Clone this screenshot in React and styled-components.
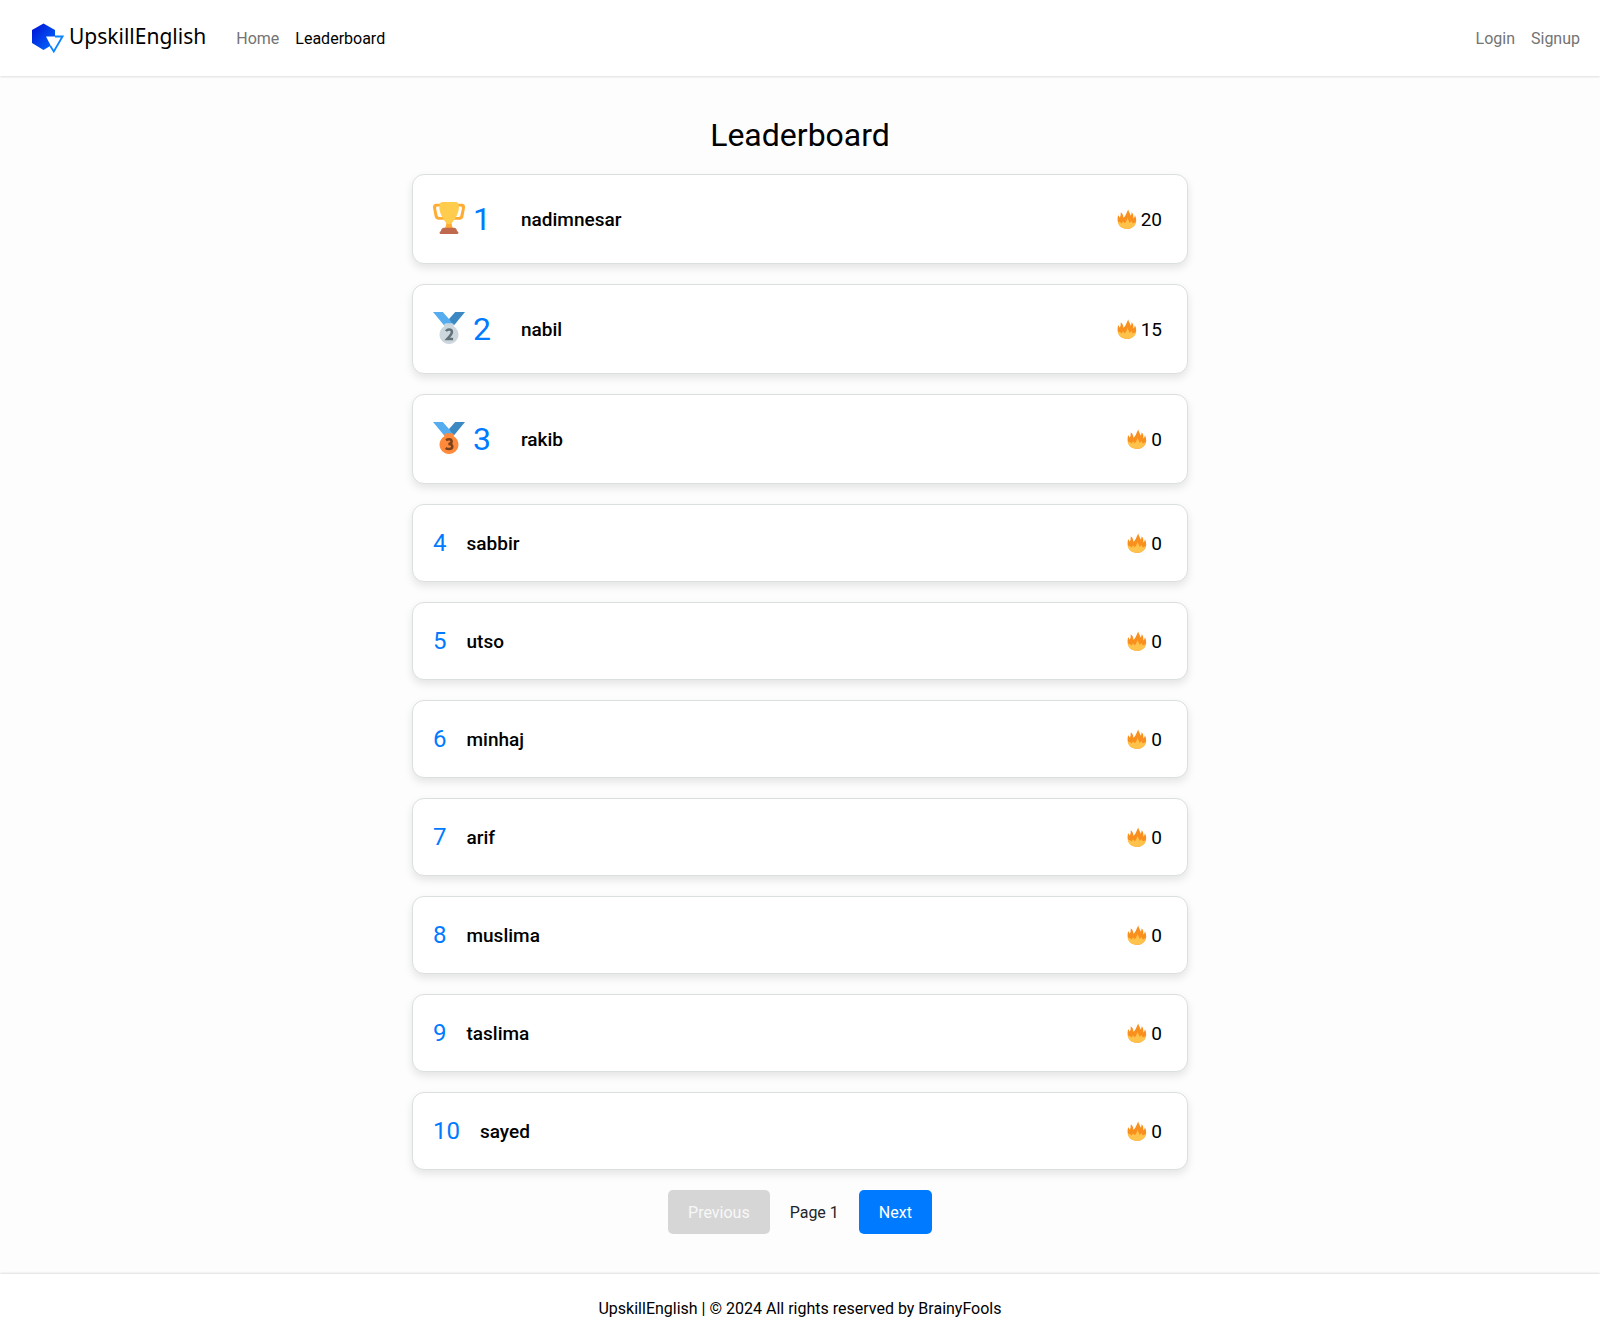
import React, { useState } from "react";
import styled, { createGlobalStyle } from "styled-components";

const GlobalStyle = createGlobalStyle`
  *, *::before, *::after { box-sizing: border-box; }
  body {
    margin: 0;
    background: #fdfdfd;
    color: #000;
    font-family: Roboto, "Liberation Sans", sans-serif;
    font-size: 16px;
    line-height: 25px;
  }
`;

const Page = styled.div`
  display: flex;
  flex-direction: column;
  min-height: 100vh;
`;

const Navbar = styled.header`
  display: flex;
  align-items: center;
  justify-content: space-between;
  padding: 18px 12px 17px 32px;
  background: #fff;
  box-shadow: 0 1px 2px rgba(0, 0, 0, 0.12);
`;

const NavGroup = styled.nav`
  display: flex;
  align-items: center;
`;

const Brand = styled.a`
  display: flex;
  align-items: center;
  gap: 5px;
  margin-right: 22px;
  color: #000;
  text-decoration: none;
`;

const BrandName = styled.span`
  padding-bottom: 5px;
  font-family: "Noto Sans", "Open Sans", sans-serif;
  font-size: 21px;
  line-height: 36px;
`;

const NavLink = styled.a`
  padding: 8px;
  color: ${(p) => (p.$active ? "#000" : "#737373")};
  text-decoration: none;
`;

const Main = styled.main`
  flex: 1;
  width: 100%;
  max-width: 800px;
  margin: 0 auto;
  padding: 40px 12px;
`;

const Title = styled.h1`
  margin: 0 0 20px;
  font-size: 32px;
  font-weight: 400;
  line-height: 38px;
  text-align: center;
`;

const List = styled.ol`
  display: flex;
  flex-direction: column;
  gap: 20px;
  margin: 0;
  padding: 0;
  list-style: none;
`;

const Card = styled.li`
  display: flex;
  align-items: center;
  padding: 20px;
  border: 1px solid #dadfe0;
  border-radius: 12px;
  background: #fff;
  box-shadow: 0 4px 8px rgba(0, 0, 0, 0.1);
`;

const Rank = styled.div`
  display: flex;
  align-items: center;
  gap: 8px;
  margin-right: ${(p) => (p.$top ? 30 : 20)}px;
  color: #007bff;
  font-size: ${(p) => (p.$top ? 32 : 24)}px;
  line-height: ${(p) => (p.$top ? 48 : 36)}px;

  svg {
    margin-bottom: 2px;
  }
`;

const Name = styled.div`
  flex: 1;
  font-size: 19px;
  font-weight: 500;
`;

const Score = styled.div`
  display: flex;
  align-items: center;
  gap: 4px;
  margin-right: 5px;
  font-size: 19px;
`;

const Pager = styled.div`
  display: flex;
  align-items: center;
  justify-content: center;
  gap: 20px;
  margin-top: 20px;
  color: #212529;
`;

const PageButton = styled.button`
  padding: 10px 20px 9px;
  border: 0;
  border-radius: 5px;
  background: #007bff;
  color: #fff;
  font: inherit;
  cursor: pointer;

  &:disabled {
    background: #d6d6d6;
    color: #f8f8f8;
    cursor: not-allowed;
  }
`;

const Footer = styled.footer`
  padding: 22px 12px 21px;
  background: #fff;
  box-shadow: 0 -1px 2px rgba(0, 0, 0, 0.12);
  text-align: center;
`;

const Logo = () => (
  <svg width="32" height="32" viewBox="0 0 32 32" aria-hidden="true">
    <defs>
      <linearGradient id="hex" x1="0" y1="0" x2="1" y2="1">
        <stop offset="0.1" stopColor="#0018d8" />
        <stop offset="1" stopColor="#0070ff" />
      </linearGradient>
    </defs>
    <path d="M11.5 0.5 23 7v13l-11.500 7L0 20V7z" fill="url(#hex)" />
    <path d="M16.500 13.500h14L21.800 28.500z" fill="none" />
    <path d="M14 13.500h16.500L21.800 28.500z" fill="#fff" />
    <path d="M23 13.500h7.500L21.800 28.500l-3.500-5.500" fill="none" stroke="#0a84ff" strokeWidth="1.800" />
  </svg>
);

const Trophy = () => (
  <svg width="32" height="32" viewBox="0 0 36 36" aria-label="Trophy" role="img">
    <path fill="#FFAC33" d="M5.123 5h6C12.227 5 13 4.896 13 6V4c0-1.104-.773-2-1.877-2h-8c-2 0-3.583 2.125-3 5 0 0 1.791 9.375 1.917 9.958C2.373 18.500 4.164 20 6.081 20h6.958c1.105 0-.039-1.896-.039-3v-2c0 1.104-.773 2-1.877 2h-4c-1.104 0-1.833-1.042-2-2S3.539 7.667 3.539 7.667C3.206 5.750 4.018 5 5.123 5zm25.812 0h-6C23.831 5 22 4.896 22 6V4c0-1.104 1.831-2 2.935-2h8c2 0 3.584 2.125 3 5 0 0-1.633 9.419-1.771 10-.354 1.500-2.042 3-4 3h-7.146C21.914 20 22 18.104 22 17v-2c0 1.104 1.831 2 2.935 2h4c1.104 0 1.834-1.042 2-2s1.584-7.333 1.584-7.333C32.851 5.750 32.040 5 30.935 5zM20.832 22c0-6.958-2.709 0-2.709 0s-3-6.958-3 0-3.291 10-3.291 10h12.292c-.001 0-3.292-3.042-3.292-10z" />
    <path fill="#FFCC4D" d="M29.123 6.577c0 6.775-6.770 18.423-11 18.423-4.231 0-11-11.649-11-18.423 0-5.776 2.128-6.577 3.671-6.577h14.657c1.542 0 3.672.801 3.672 6.577z" />
    <path fill="#C1694F" d="M27 33c0-2.500-1.500-4-3.500-4h-11C10.500 29 9 30.500 9 33H8.500C7 33 7 36 8.500 36h19c1.500 0 1.500-3 0-3z" />
  </svg>
);

const Medal = ({ place }) => (
  <svg width="32" height="32" viewBox="0 0 36 36" aria-label={`Medal ${place}`} role="img">
    <path fill="#55ACEE" d="m18 8-7-8H0l14 17 11.521-4.750z" />
    <path fill="#3B88C3" d="m25 0-7 8 5.390 7.312 1.227-1.489L36 0z" />
    <path
      fill={place === 2 ? "#CCD6DD" : "#FF8A3B"}
      d="M23.205 16.026c.080-.217.131-.448.131-.693V14.665a2 2 0 0 0-2-2h-6.667a2 2 0 0 0-2 2v.668c0 .245.050.476.131.693-3.258 1.826-5.464 5.307-5.464 9.307C7.336 31.224 12.111 36 18.002 36s10.667-4.776 10.667-10.667c0-4-2.206-7.481-5.464-9.307z"
    />
    {place === 2 ? (
      <path fill="none" stroke="#627077" strokeWidth="2.800" d="M14.600 21.500c1-1.500 2.500-1.900 3.600-1.900 1.800 0 3.100 1 3.100 2.800 0 2.400-3 5.300-5.400 8h6.700" />
    ) : (
      <path fill="none" stroke="#7C4119" strokeWidth="2.800" d="M14.700 20.700c1-.9 2.100-1.200 3.300-1.200 1.900 0 3 .9 3 2.500s-1.200 2.700-3.700 2.700c2.900 0 4.400 1 4.400 2.900 0 1.800-1.500 2.900-3.700 2.900-1.400 0-2.700-.4-3.700-1.300" />
    )}
  </svg>
);

const Flame = () => (
  <svg width="20" height="20" viewBox="0 0 20 20" aria-hidden="true">
    <path fill="#f98f1d" d="M1.200 6.200C2 6.800 2.300 7.600 2.600 8.800 3.900 7.300 3.700 5.200 3.700 3.600c2 .6 2.400 2.800 2.700 5.200C8.600 7.800 9.200 4 11.400.2c-.3 2.200 1.800 3.500 2.300 6.600.8-.9.900-2.200.8-3.600 1.900 1.500 2 4 1.900 6.200 1.100-.8 1.500-2.200 1.500-3.400 3.400 7-.2 13.800-7.900 13.800C2.600 19.800-1 13.500 1.200 6.200z" />
    <path fill="#ffc24a" d="M.7 13c1.600-.5 2.800.4 3.700 1.600.8-.6 1-1.300 1.100-2.200 1.200.2 1.800 1 2.200 1.900 1.700-1.200 1.800-3.400 3-5.400.2 2 1.700 3 1.900 5 .9-.3 1.300-1 1.400-1.800 1 .5 1.400 1.300 1.500 2.200 1.200.1 2.500-.5 3.600-1.700-.5 4.400-4 7.200-9.100 7.200C4.900 19.800 1.500 17.300.7 13z" />
  </svg>
);

const players = [
  ["nadimnesar", 20],
  ["nabil", 15],
  ["rakib", 0],
  ["sabbir", 0],
  ["utso", 0],
  ["minhaj", 0],
  ["arif", 0],
  ["muslima", 0],
  ["taslima", 0],
  ["sayed", 0],
];

export default function App() {
  const [page, setPage] = useState(1);
  return (
    <Page>
      <GlobalStyle />
      <Navbar>
        <NavGroup>
          <Brand href="#home">
            <Logo />
            <BrandName>UpskillEnglish</BrandName>
          </Brand>
          <NavLink href="#home">Home</NavLink>
          <NavLink href="#leaderboard" $active>Leaderboard</NavLink>
        </NavGroup>
        <NavGroup>
          <NavLink href="#login">Login</NavLink>
          <NavLink href="#signup">Signup</NavLink>
        </NavGroup>
      </Navbar>
      <Main>
        <Title>Leaderboard</Title>
        <List>
          {players.map(([name, score], i) => {
            const place = i + 1;
            return (
              <Card key={name}>
                <Rank $top={place <= 3}>
                  {place === 1 && <Trophy />}
                  {(place === 2 || place === 3) && <Medal place={place} />}
                  <span>{place}</span>
                </Rank>
                <Name>{name}</Name>
                <Score>
                  <Flame />
                  <span>{score}</span>
                </Score>
              </Card>
            );
          })}
        </List>
        <Pager>
          <PageButton disabled={page === 1} onClick={() => setPage(page - 1)}>Previous</PageButton>
          <span>Page {page}</span>
          <PageButton onClick={() => setPage(page + 1)}>Next</PageButton>
        </Pager>
      </Main>
      <Footer>UpskillEnglish | © 2024 All rights reserved by BrainyFools</Footer>
    </Page>
  );
}
